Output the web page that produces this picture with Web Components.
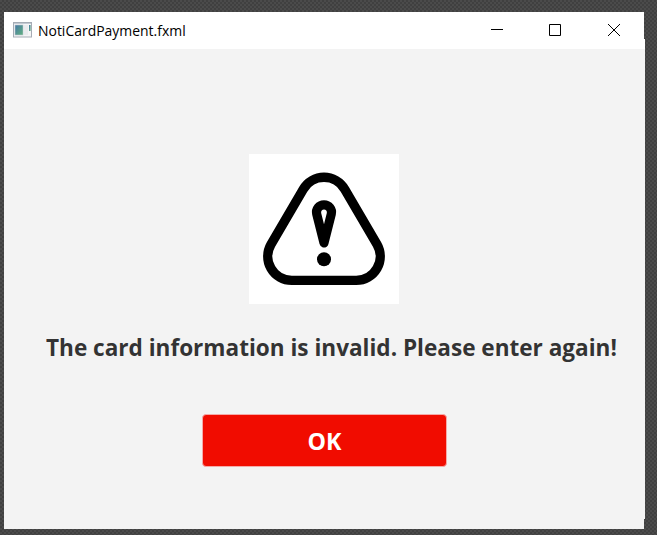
<!DOCTYPE html>
<html lang="en"><head><meta charset="utf-8"><title>NotiCardPayment.fxml</title>
<style>
html,body{margin:0;height:100%;overflow:hidden}
body{background:conic-gradient(#404040 25%,#4b4b4b 0 50%,#404040 0 75%,#4b4b4b 0) 0 0/4px 4px;font-family:"Open Sans","Noto Sans",sans-serif}
</style></head><body>
<app-window caption="NotiCardPayment.fxml">
<warning-image></warning-image>
<notice-text>The card information is invalid. Please enter again!</notice-text>
<action-button>OK</action-button>
</app-window>
<script>
const define=(name,html,setup)=>customElements.define(name,class extends HTMLElement{
 constructor(){super();this.attachShadow({mode:'open'}).innerHTML=html;}
 connectedCallback(){setup&&setup(this);}
});
define('title-bar',`<style>
:host{display:flex;height:37px;background:#fff;align-items:center;padding:0 1px 0 9px;box-sizing:border-box;color:#000}
.icon{flex:none;margin:-1px 6px 0 0}
.t{flex:1;font:15px/37px "Open Sans","Noto Sans",sans-serif;white-space:nowrap}
.t span{display:inline-block;transform-origin:0 50%;transform:scaleX(.93)}
.c{flex:none}
</style>
<svg class="icon" width="19" height="16" viewBox="0 0 19 16"><defs><linearGradient id="g" x1="0" y1="0" x2="1" y2="1"><stop stop-color="#4577a5"/><stop offset="1" stop-color="#62b27f"/></linearGradient></defs><rect x=".5" y=".5" width="18" height="14.5" fill="#f5f5f6" stroke="#a5acb5"/><path d="M1 1.5h17" stroke="#c3c9d2"/><rect x="2" y="3" width="8" height="10" fill="url(#g)" stroke="#b9c4cc" stroke-width=".6"/><rect x="11" y="3" width="4" height="10" fill="#e9ebee"/><rect x="16" y="3" width="1.6" height="6" fill="url(#g)"/></svg>
<div class="t"><span><slot></slot></span></div>
<svg class="c" width="153" height="37" viewBox="491 12 153 37" fill="none" stroke="#000"><path d="M491 29.5h12M549.5 24.5h11v11h-11zM608 24l12 12M620 24l-12 12"/></svg>`);
define('app-window',`<style>
:host{display:block;width:641px;margin:12px 0 0 4px;height:517px;background:#f3f3f3;clip-path:polygon(0 0,640px 0,640px 27px,641px 27px,641px 507px,640px 507px,640px 517px,0 517px)}
main{display:flex;flex-direction:column;align-items:center;width:640px;padding-top:105px}
</style><title-bar></title-bar><main><slot></slot></main>`,e=>e.shadowRoot.querySelector('title-bar').textContent=e.getAttribute('caption'));
define('warning-image',`<style>:host{display:block;width:150px;height:150px;background:#fff}svg{display:block}</style>
<svg width="150" height="150" fill="none" stroke="#000" stroke-width="9.4" stroke-linejoin="round"><path d="M54.2 35.3A24 24 0 0 1 95.8 35.3L128 90.4A24 24 0 0 1 107.2 126.4H42.8A24 24 0 0 1 22 90.4Z"/><path stroke-width="9.2" d="M75 89L67.7 60A7.5 7.5 0 1 1 82.3 60Z"/><circle cx="75" cy="105.3" r="7" fill="#000" stroke="none"/></svg>`);
define('notice-text',`<style>:host{display:block;width:571px;height:32px;margin:27px 0 0 15px;font-weight:700;font-size:24px;line-height:32px;color:#333;white-space:nowrap}
span{display:inline-block;transform-origin:0 50%;transform:scaleX(.94)}</style><span><slot></slot></span>`);
define('action-button',`<style>:host{display:block;margin:51px 0 0 1px}
button{display:block;box-sizing:border-box;width:245px;height:53px;border:1px solid #f5aaa8;border-radius:4px;background:#f10c00;color:#fff;font:700 24px/51px "Open Sans","Noto Sans",sans-serif;padding:0}
span{display:inline-block;transform:scaleX(.97)}</style><button><span><slot></slot></span></button>`);
</script></body></html>
